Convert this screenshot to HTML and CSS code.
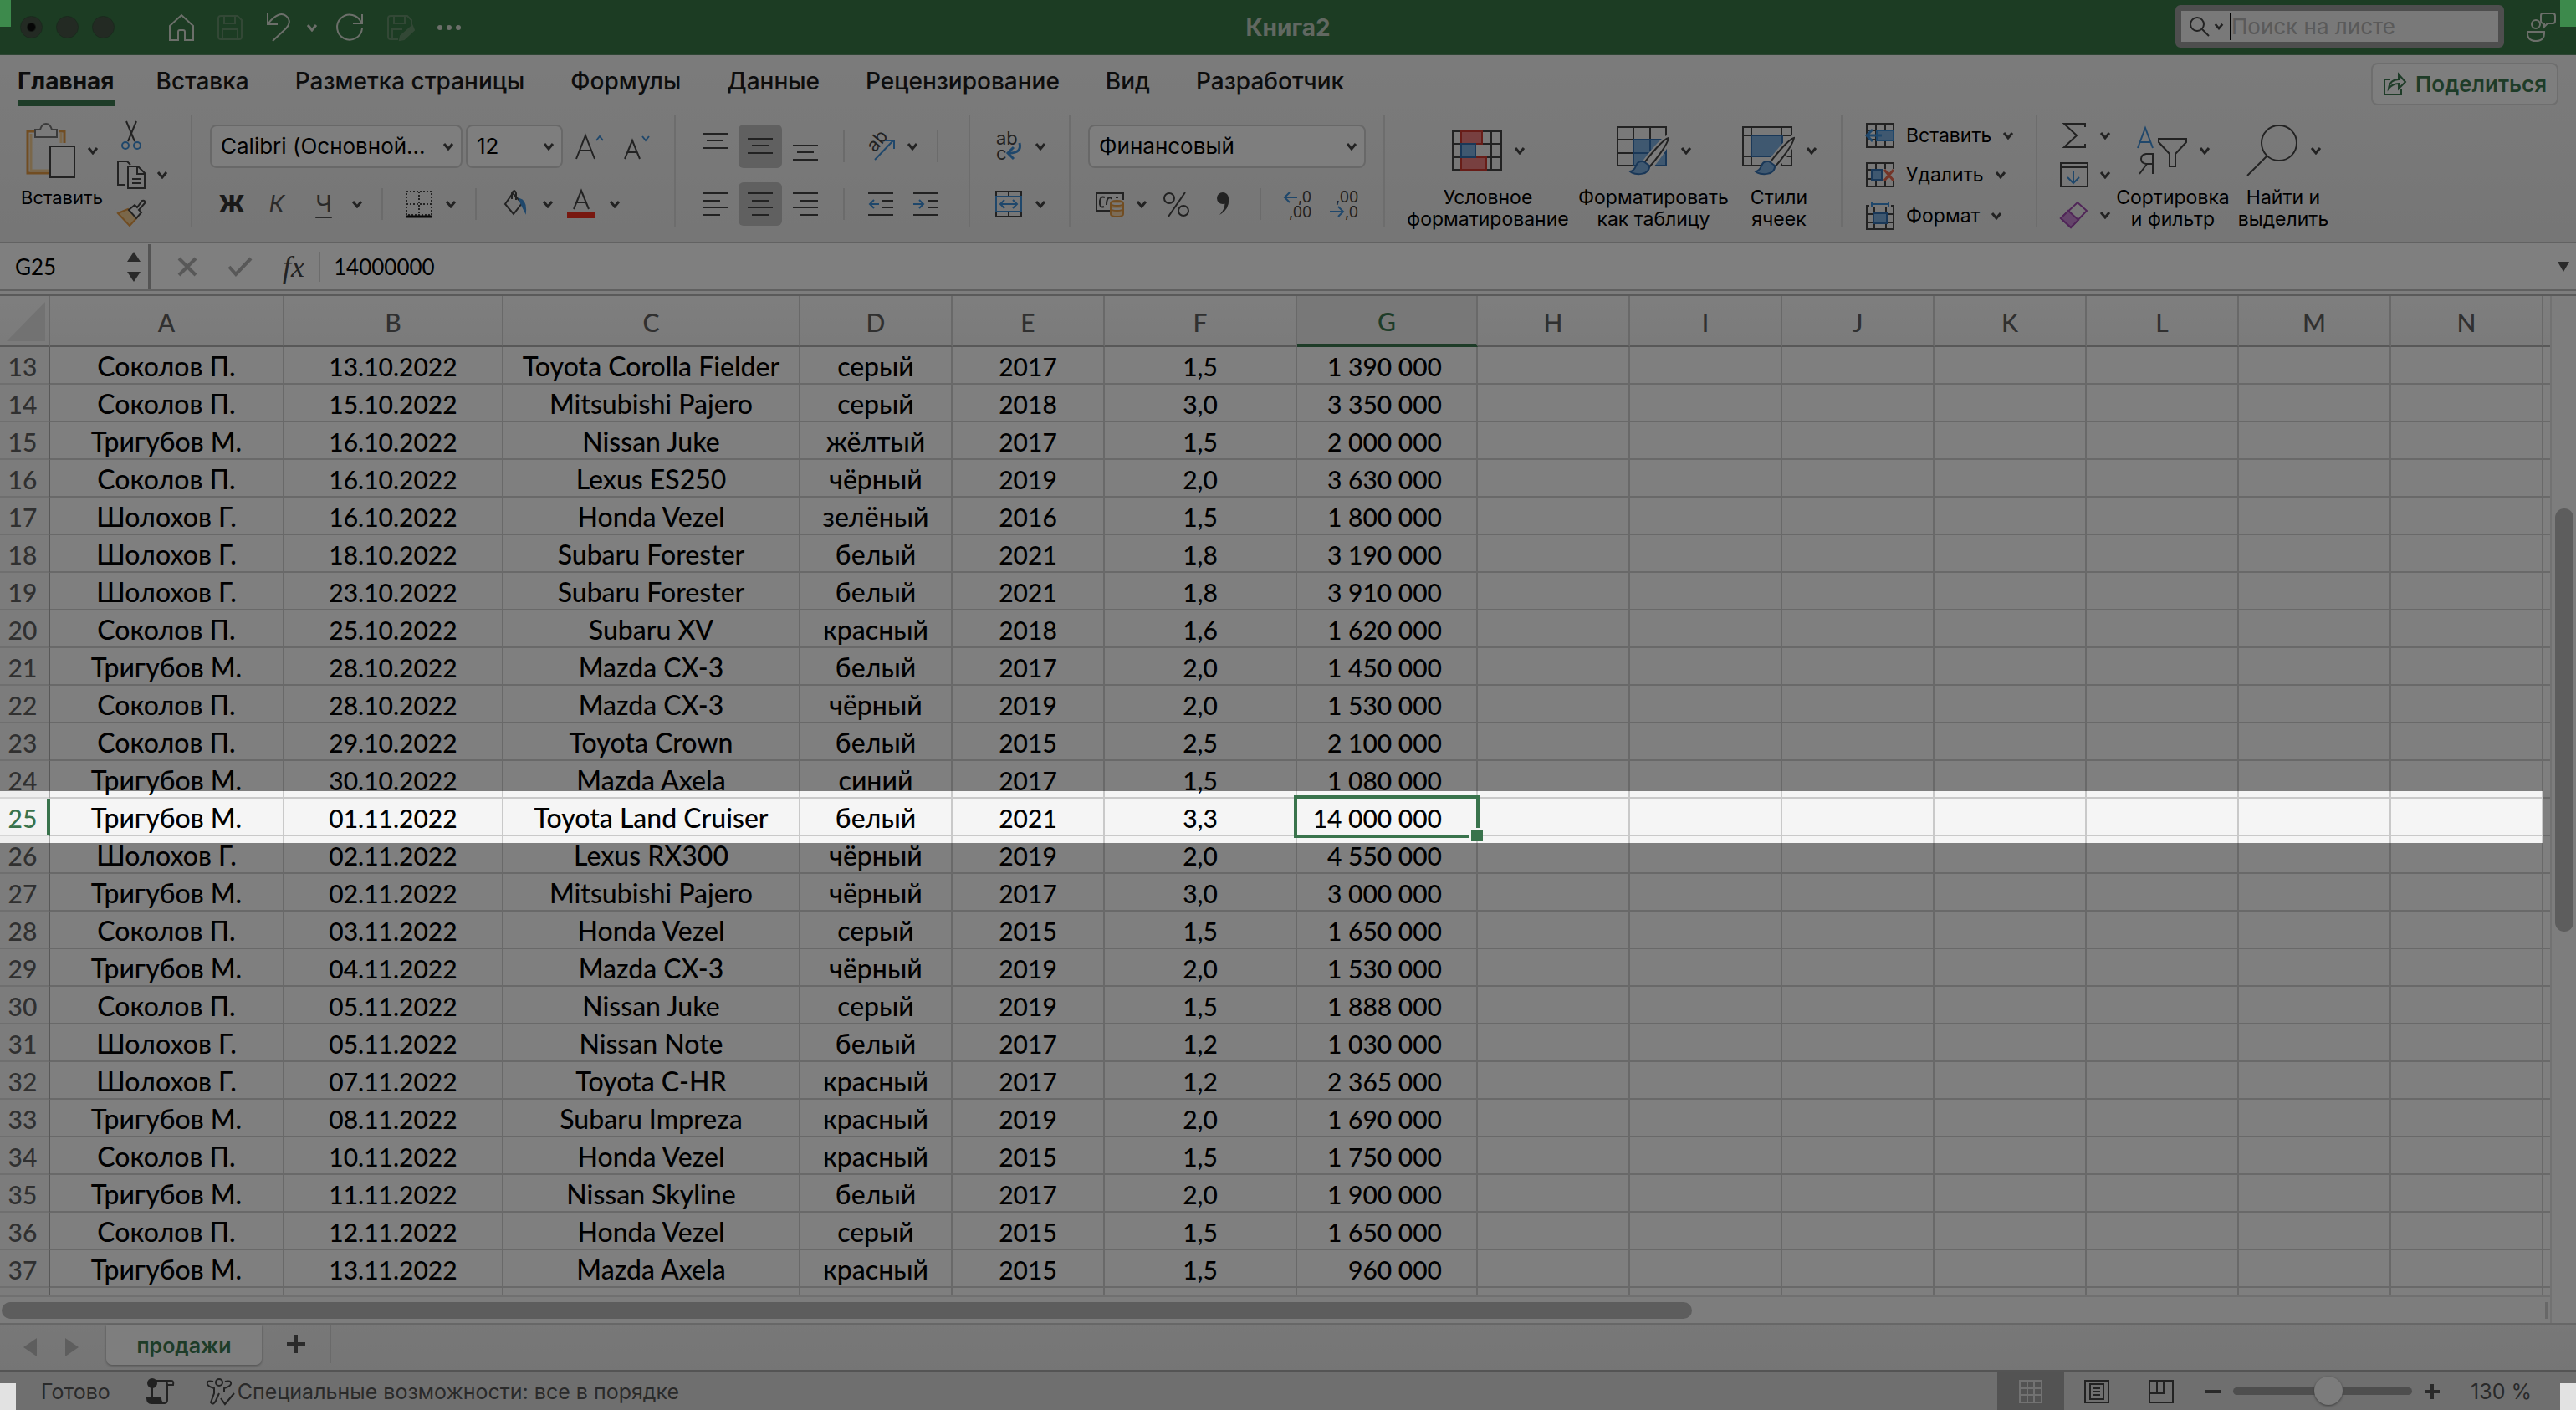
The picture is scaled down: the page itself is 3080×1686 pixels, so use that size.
FILE: index.html
```html
<!DOCTYPE html>
<html lang="ru">
<head>
<meta charset="utf-8">
<title>Книга2</title>
<link rel="stylesheet" href="styles.css">
</head>
<body>
<svg class="defs" aria-hidden="true">
  <symbol id="chev" viewBox="0 0 14 10"><path d="M2 2l5 6 5-6" fill="none" stroke="currentColor" stroke-width="3"/></symbol>
  <symbol id="brush" viewBox="0 0 64 60"><path d="M63 15c-6 1-24 24-30 32l6 5C47 42 62 24 63 15z" fill="#f6f6f6" stroke="#f4f4f4" stroke-width="7"/><path d="M63 15c-6 1-22 20-30 31l6 5C47 42 62 23 63 15z" fill="#f6f6f6" stroke="#444" stroke-width="2"/><path d="M33 43c-12-1-6 10-16 12 5 5 24 5 23-7z" fill="#7fb0e0" stroke="#3570b0" stroke-width="2"/></symbol>
</svg>

<header class="titlebar">
  <div class="lights"><i class="on"></i><i></i><i></i></div>
  <nav class="quick">
    <button aria-label="Домой"><svg width="32" height="34" viewBox="0 0 32 34"><path d="M2 32V15L16 2l14 13v17H20V22q0-2-2-2h-4q-2 0-2 2v10z"/></svg></button>
    <button class="off" aria-label="Сохранить"><svg width="32" height="32" viewBox="0 0 32 32"><path d="M2 5q0-3 3-3h20l5 5v20q0 3-3 3H5q-3 0-3-3zM9 2v9h13V2M7 30V18h18v12"/></svg></button>
    <button aria-label="Отменить"><svg width="32" height="36" viewBox="0 0 32 36"><path d="M3 1v13h12M3 14C12 2 20 0 25 4c6 5 4 11 0 15L9 34"/></svg></button>
    <button aria-label="Список отмены"><svg width="14" height="10"><use href="#chev"/></svg></button>
    <button aria-label="Повторить"><svg width="36" height="36" viewBox="0 0 36 36"><path d="M33 2v11H22M32 12A15 15 0 1 0 33 19"/></svg></button>
    <button class="off" aria-label="Сохранить как"><svg width="34" height="32" viewBox="0 0 34 32"><path d="M14 30H5q-3 0-3-3V5q0-3 3-3h20l5 5v6M9 2v9h13V2M7 30V18h12"/><path d="M31 14l2 5-12 11-5 1 1-5z" fill="currentColor"/></svg></button>
    <button aria-label="Ещё"><svg width="30" height="8"><g fill="#d8dfd5" stroke="none"><circle cx="4" cy="4" r="3"/><circle cx="15" cy="4" r="3"/><circle cx="26" cy="4" r="3"/></g></svg></button>
  </nav>
  <h1>Книга2</h1>
  <div class="title-end">
    <label class="search">
      <svg width="26" height="26" viewBox="0 0 26 26"><circle cx="10" cy="10" r="8"/><path d="M16 16l8 8"/></svg>
      <svg width="12" height="9"><use href="#chev"/></svg>
      <i class="caret"></i>
      <input type="search" placeholder="Поиск на листе" aria-label="Поиск на листе">
    </label>
    <button class="people" aria-label="Соавторы"><svg width="36" height="36" viewBox="0 0 36 36"><circle cx="12" cy="14" r="5"/><path d="M2 23h20q1 11-10 11T2 23zM20 1h12q3 0 3 3v6q0 3-3 3h-6l-4 4v-4q-4 0-4-3V4q0-3 2-3z"/></svg></button>
  </div>
</header>

<section class="ribbon">
  <div class="tabs">
    <nav>
      <a class="current" href="#home">Главная</a><a href="#insert">Вставка</a><a href="#layout">Разметка страницы</a><a href="#formulas">Формулы</a><a href="#data">Данные</a><a href="#review">Рецензирование</a><a href="#view">Вид</a><a href="#dev">Разработчик</a>
    </nav>
    <button class="share"><svg width="28" height="28" viewBox="0 0 28 28"><path d="M9 8H2v18h20v-6M7 19C8 11 13 8 19 8V2l8 9-8 8v-6c-6 0-9 2-12 6z"/></svg>Поделиться</button>
  </div>

  <div class="tools">
    <div class="group g-clip">
      <button class="big"><span class="pic"><svg width="60" height="66" viewBox="0 0 60 66"><path d="M10 10H2v50h28M40 10h6v14" fill="none" stroke="#e39a45" stroke-width="3"/><path d="M6 13v44h24M42 12v12" fill="none" stroke="#f5cf94" stroke-width="3"/><path d="M11 17V8h6q2-7 7-7t7 7h6v9z" fill="#f4f4f4" stroke="#777" stroke-width="2"/><path d="M29 28h29v37H29z" fill="#f4f4f4" stroke="#444" stroke-width="2"/></svg><svg width="14" height="10"><use href="#chev"/></svg></span><span>Вставить</span></button>
      <div class="stack">
        <button aria-label="Вырезать"><svg width="36" height="36" viewBox="0 0 36 36"><path d="M12 1l10 24M24 1L14 25" stroke="#444" stroke-width="2"/><circle cx="11" cy="30" r="4" stroke="#3f8fd6"/><circle cx="25" cy="30" r="4" stroke="#3f8fd6"/></svg></button>
        <button class="with" aria-label="Копировать"><svg width="36" height="36" viewBox="0 0 36 36"><path d="M11 30H2V2h11l4 4M14 8h12l8 8v18H14zM25 8v9h9M19 23h10M19 28h10"/></svg><svg width="14" height="10"><use href="#chev"/></svg></button>
        <button aria-label="Формат по образцу"><svg width="36" height="34" viewBox="0 0 36 34"><path d="M2 17l12-5 11 10-9 10z" stroke="#e39a45" fill="#f5cf94"/><path d="M15 13l7-6 3 3 6-8q4-1 3 3l-7 8 3 3-6 7z" fill="#f4f4f4"/></svg></button>
      </div>
    </div>

    <div class="group g-font">
      <div class="row">
        <label class="pick w302"><select aria-label="Шрифт"><option>Calibri (Основной...</option></select><svg width="14" height="10"><use href="#chev"/></svg></label>
        <label class="pick w116"><select aria-label="Размер шрифта"><option>12</option></select><svg width="14" height="10"><use href="#chev"/></svg></label>
        <button class="w56" aria-label="Увеличить шрифт"><svg width="36" height="32" viewBox="0 0 36 32"><path d="M2 31L13 3l11 28M6 21h14"/><path d="M26 9l4-5 4 5" stroke="#3f8fd6"/></svg></button>
        <button class="w56" aria-label="Уменьшить шрифт"><svg width="36" height="32" viewBox="0 0 36 32"><path d="M4 31l9-22 9 22M7 23h12"/><path d="M25 4l4 5 4-5" stroke="#3f8fd6"/></svg></button>
      </div>
      <div class="row">
        <button class="w52 glyph bold">Ж</button>
        <button class="w56 glyph ital">К</button>
        <button class="w56 glyph under">Ч</button>
        <button class="w24" aria-label="Вид подчёркивания"><svg width="14" height="10"><use href="#chev"/></svg></button>
        <i class="bar"></i>
        <button class="w52" aria-label="Границы"><svg width="34" height="34" viewBox="0 0 34 34"><path d="M2 2h30v28H2zM17 2v28M2 17h30" stroke-dasharray="2 2"/><path d="M1 32h32" stroke="#111" stroke-width="3"/></svg></button>
        <button class="w24" aria-label="Вид границ"><svg width="14" height="10"><use href="#chev"/></svg></button>
        <i class="bar"></i>
        <button class="w56" aria-label="Заливка"><svg width="34" height="34" viewBox="0 0 34 34"><path d="M15 4l11 12-10 13L6 17zM14 11V4q3-6 5 0v8"/><path d="M23 11q8 2 7 15l-4-8z" fill="#3f8fd6" stroke="#3f8fd6"/></svg></button>
        <button class="w24" aria-label="Цвет заливки"><svg width="14" height="10"><use href="#chev"/></svg></button>
        <button class="w56" aria-label="Цвет текста"><svg width="36" height="36" viewBox="0 0 36 36"><path d="M9 24l9-22 9 22M12 16h12"/><path d="M1 27h34v8H1z" fill="#f03020" stroke="none"/></svg></button>
        <button class="w24" aria-label="Выбор цвета текста"><svg width="14" height="10"><use href="#chev"/></svg></button>
      </div>
    </div>

    <div class="group g-align">
      <div class="row">
        <button class="w56" aria-label="По верхнему краю"><svg width="32" height="36" viewBox="0 0 32 36"><path d="M1 3h30M6 11h20M1 20h30"/></svg></button>
        <button class="w52 pressed" aria-label="Посередине"><svg width="32" height="36" viewBox="0 0 32 36"><path d="M1 9h30M6 17h20M1 26h30"/></svg></button>
        <button class="w56" aria-label="По нижнему краю"><svg width="32" height="36" viewBox="0 0 32 36"><path d="M1 17h30M6 25h20M1 34h30"/></svg></button>
        <i class="bar"></i>
        <button class="w52" aria-label="Ориентация"><svg width="38" height="36" viewBox="0 0 38 36"><text x="0" y="0" transform="translate(12 26) rotate(-50)" class="ab">ab</text><path d="M12 34L34 11M24 11h11v10" stroke="#3f8fd6"/></svg></button>
        <button class="w24" aria-label="Виды ориентации"><svg width="14" height="10"><use href="#chev"/></svg></button>
        <i class="bar"></i>
      </div>
      <div class="row">
        <button class="w56" aria-label="По левому краю"><svg width="32" height="32" viewBox="0 0 32 32"><path d="M1 3h30M1 12h21M1 20h30M1 29h21"/></svg></button>
        <button class="w52 pressed" aria-label="По центру"><svg width="32" height="32" viewBox="0 0 32 32"><path d="M1 3h30M6 12h20M1 20h30M6 29h20"/></svg></button>
        <button class="w56" aria-label="По правому краю"><svg width="32" height="32" viewBox="0 0 32 32"><path d="M1 3h30M10 12h21M1 20h30M10 29h21"/></svg></button>
        <i class="bar"></i>
        <button class="w52" aria-label="Уменьшить отступ"><svg width="32" height="32" viewBox="0 0 32 32"><path d="M1 3h30M18 12h13M18 20h13M1 29h30"/><path d="M14 16H3M8 11l-5 5 5 5" stroke="#3f8fd6"/></svg></button>
        <button class="w56" aria-label="Увеличить отступ"><svg width="32" height="32" viewBox="0 0 32 32"><path d="M1 3h30M18 12h13M18 20h13M1 29h30"/><path d="M1 16h12M8 11l5 5-5 5" stroke="#3f8fd6"/></svg></button>
      </div>
    </div>

    <div class="group g-wrap">
      <div class="row">
        <button class="w52" aria-label="Перенос текста"><svg width="34" height="36" viewBox="0 0 34 36"><text x="2" y="16" class="ab">ab</text><text x="2" y="34" class="ab">c</text><path d="M30 14q3 12-12 12M23 19l-7 7 7 7" stroke="#3f8fd6" stroke-width="3"/></svg></button>
        <button class="w24" aria-label="Виды переноса"><svg width="14" height="10"><use href="#chev"/></svg></button>
      </div>
      <div class="row">
        <button class="w52" aria-label="Объединить"><svg width="34" height="34" viewBox="0 0 34 34"><path d="M2 2h30v30H2zM17 2v6M17 26v6"/><path d="M2 8h30v18H2zM7 17h20M12 12l-5 5 5 5M22 12l5 5-5 5" stroke="#3f8fd6"/></svg></button>
        <button class="w24" aria-label="Виды объединения"><svg width="14" height="10"><use href="#chev"/></svg></button>
      </div>
    </div>

    <div class="group g-num">
      <div class="row">
        <label class="pick w332"><select aria-label="Числовой формат"><option>Финансовый</option></select><svg width="14" height="10"><use href="#chev"/></svg></label>
      </div>
      <div class="row">
        <button class="w52" aria-label="Денежный формат"><svg width="36" height="32" viewBox="0 0 36 32"><path d="M18 24H2V3h32v8M12 8q-5-2-6 4v4q1 5 5 3M20 10q-1-3-4-1-2 2-2 8M28 8h-3"/><path d="M19 15q0-3 7.500-3t7.500 3v13q0 3-7.500 3T19 28zM19 15q0 3 7.500 3t7.500-3M19 21q0 3 7.500 3t7.500-3" fill="#f6d9b0" stroke="#e39a45"/></svg></button>
        <button class="w24" aria-label="Валюта"><svg width="14" height="10"><use href="#chev"/></svg></button>
        <button class="w60" aria-label="Процент"><svg width="34" height="32" viewBox="0 0 34 32"><circle cx="8" cy="9" r="6"/><circle cx="25" cy="24" r="6"/><path d="M27 2L7 31"/></svg></button>
        <button class="w52" aria-label="Разделитель разрядов"><svg width="18" height="30" viewBox="0 0 18 30"><circle cx="8" cy="8" r="7" fill="#444" stroke="none"/><path d="M15 7q2 14-11 21 8-9 6-16z" fill="#444" stroke="none"/></svg></button>
        <i class="bar"></i>
        <button class="w52" aria-label="Увеличить разрядность"><svg width="36" height="36" viewBox="0 0 36 36"><text x="19" y="16" class="num">,0</text><text x="8" y="34" class="num">,00</text><path d="M18 10H3M9 4l-6 6 6 6" stroke="#3f8fd6"/></svg></button>
        <button class="w60" aria-label="Уменьшить разрядность"><svg width="36" height="36" viewBox="0 0 36 36"><text x="8" y="16" class="num">,00</text><text x="19" y="34" class="num">,0</text><path d="M1 27h15M11 21l6 6-6 6" stroke="#3f8fd6"/></svg></button>
      </div>
    </div>

    <div class="group g-style">
      <button class="big w192"><span class="pic"><svg width="62" height="50" viewBox="0 0 62 50"><path d="M2 2h58v46H2zM12 2v46M48 2v46M2 17h58M2 33h58"/><path d="M12 2h25v15H12zM12 33h30v15H12z" fill="#f08080" stroke="#d03a30"/><path d="M12 17h17v16H12z" fill="#7fb0e0" stroke="#3570b0"/></svg><svg width="14" height="10"><use href="#chev"/></svg></span><span>Условное<br>форматирование</span></button>
      <button class="big w180"><span class="pic"><svg width="64" height="60" viewBox="0 0 64 60"><path d="M60 2H2v46h58zM21 2v46M41 2v46M2 17h58M2 33h58"/><path d="M21 17h39v31H21z" fill="#7fb0e0" stroke="#3570b0"/><path d="M21 33h39M41 17v31" stroke="#3570b0"/><use href="#brush"/></svg><svg width="14" height="10"><use href="#chev"/></svg></span><span>Форматировать<br>как таблицу</span></button>
      <button class="big w96"><span class="pic"><svg width="64" height="60" viewBox="0 0 64 60"><path d="M60 2H2v46h58zM12 2v46M48 2v46M2 12h58M2 37h58"/><path d="M12 12h37v25H12z" fill="#7fb0e0" stroke="#3570b0"/><use href="#brush"/></svg><svg width="14" height="10"><use href="#chev"/></svg></span><span>Стили<br>ячеек</span></button>
    </div>

    <div class="group g-cells">
      <button><svg width="36" height="32" viewBox="0 0 36 32"><path d="M2 2h32v28H2zM13 2v28M24 2v28M2 10h32M2 21h32"/><path d="M14 10h20v12H14z" fill="#7fb0e0" stroke="#3f8fd6"/><path d="M20 16H2M9 9l-7 7 7 7" stroke="#3f8fd6" stroke-width="3"/></svg>Вставить<svg width="14" height="10"><use href="#chev"/></svg></button>
      <button><svg width="36" height="32" viewBox="0 0 36 32"><path d="M2 2h32v28H2zM13 2v28M24 2v28M2 10h32M2 21h32"/><path d="M8 10h12v12H8z" fill="#7fb0e0" stroke="#3570b0"/><path d="M22 9h14v14H22z" fill="#f4f4f4" stroke="none"/><path d="M23 10l11 13M34 10L23 23" stroke="#e86a50" stroke-width="3"/></svg>Удалить<svg width="14" height="10"><use href="#chev"/></svg></button>
      <button><svg width="36" height="36" viewBox="0 0 36 36"><path d="M5 6H2v28h32V6h-3M11 8v26M25 8v26M2 16h32M2 26h32"/><path d="M10 15h16v12H10z" fill="#7fb0e0" stroke="#3570b0"/><path d="M8 4h20M8 1v6M28 1v6" stroke="#3f8fd6"/></svg>Формат<svg width="14" height="10"><use href="#chev"/></svg></button>
    </div>

    <div class="group g-edit">
      <div class="stack">
        <button class="with" aria-label="Сумма"><svg width="36" height="32" viewBox="0 0 36 32"><path d="M31 6V2H6l15 14L6 30h25v-4"/></svg><svg width="14" height="10"><use href="#chev"/></svg></button>
        <button class="with" aria-label="Заполнить"><svg width="36" height="32" viewBox="0 0 36 32"><path d="M2 2h32v28H2zM2 7h32"/><path d="M17 11v15M10 19l7 7 7-7" stroke="#3f8fd6"/></svg><svg width="14" height="10"><use href="#chev"/></svg></button>
        <button class="with" aria-label="Очистить"><svg width="36" height="34" viewBox="0 0 36 34"><path d="M2 21L22 2l11 10-19 20z" stroke="#a04ab0"/><path d="M2 21l9-9 12 11-9 9z" fill="#c88ad4" stroke="#a04ab0"/></svg><svg width="14" height="10"><use href="#chev"/></svg></button>
      </div>
      <button class="big w148"><span class="pic"><svg width="62" height="60" viewBox="0 0 62 60"><path d="M2 27L11 3l9 24M5 20h12" stroke="#3f8fd6"/><path d="M20 58V34h-8q-6 1-6 6t6 6h8M13 46L4 58"/><path d="M27 16h33v4L47 34v15h-7V34L27 20z"/></svg><svg width="14" height="10"><use href="#chev"/></svg></span><span>Сортировка<br>и фильтр</span></button>
      <button class="big w116"><span class="pic"><svg width="64" height="64" viewBox="0 0 64 64"><circle cx="40" cy="23" r="21"/><path d="M25 39L2 62"/></svg><svg width="14" height="10"><use href="#chev"/></svg></span><span>Найти и<br>выделить</span></button>
    </div>
  </div>
</section>

<section class="formula">
  <label class="namebox"><input value="G25" aria-label="Имя"><svg width="16" height="36" viewBox="0 0 16 36"><path d="M8 0l8 12H0zM0 24h16L8 36z"/></svg></label>
  <button aria-label="Отмена"><svg width="24" height="24" viewBox="0 0 24 24"><path d="M2 2l20 20M22 2L2 22"/></svg></button>
  <button aria-label="Ввод"><svg width="30" height="24" viewBox="0 0 30 24"><path d="M2 12l8 9L28 2"/></svg></button>
  <button class="fx">fx</button>
  <input class="value" value="14000000" aria-label="Строка формул">
  <button class="expand" aria-label="Развернуть"><svg width="14" height="12" viewBox="0 0 14 12"><path d="M0 0h14L7 12z"/></svg></button>
</section>

<main class="sheet">
  <div class="cells">
  <table>
    <colgroup><col class="c60"><col class="c280"><col class="c262"><col class="c355"><col class="c182"><col class="c182"><col class="c230"><col class="c216"><col class="c182"><col class="c182"><col class="c182"><col class="c182"><col class="c182"><col class="c182"><col class="c182"><col></colgroup>
    <thead><tr><th class="corner"><svg width="46" height="47" viewBox="0 0 46 47"><path d="M46 0v47H0z"/></svg></th><th>A<th>B<th>C<th>D<th>E<th>F<th class="active">G<th>H<th>I<th>J<th>K<th>L<th>M<th>N<th></tr></thead>
    <tbody>
    <tr><th>13<td>Соколов П.<td>13.10.2022<td>Toyota Corolla Fielder<td>серый<td>2017<td>1,5<td>1 390 000<td><td><td><td><td><td><td><td>
    <tr><th>14<td>Соколов П.<td>15.10.2022<td>Mitsubishi Pajero<td>серый<td>2018<td>3,0<td>3 350 000<td><td><td><td><td><td><td><td>
    <tr><th>15<td>Тригубов М.<td>16.10.2022<td>Nissan Juke<td>жёлтый<td>2017<td>1,5<td>2 000 000<td><td><td><td><td><td><td><td>
    <tr><th>16<td>Соколов П.<td>16.10.2022<td>Lexus ES250<td>чёрный<td>2019<td>2,0<td>3 630 000<td><td><td><td><td><td><td><td>
    <tr><th>17<td>Шолохов Г.<td>16.10.2022<td>Honda Vezel<td>зелёный<td>2016<td>1,5<td>1 800 000<td><td><td><td><td><td><td><td>
    <tr><th>18<td>Шолохов Г.<td>18.10.2022<td>Subaru Forester<td>белый<td>2021<td>1,8<td>3 190 000<td><td><td><td><td><td><td><td>
    <tr><th>19<td>Шолохов Г.<td>23.10.2022<td>Subaru Forester<td>белый<td>2021<td>1,8<td>3 910 000<td><td><td><td><td><td><td><td>
    <tr><th>20<td>Соколов П.<td>25.10.2022<td>Subaru XV<td>красный<td>2018<td>1,6<td>1 620 000<td><td><td><td><td><td><td><td>
    <tr><th>21<td>Тригубов М.<td>28.10.2022<td>Mazda CX-3<td>белый<td>2017<td>2,0<td>1 450 000<td><td><td><td><td><td><td><td>
    <tr><th>22<td>Соколов П.<td>28.10.2022<td>Mazda CX-3<td>чёрный<td>2019<td>2,0<td>1 530 000<td><td><td><td><td><td><td><td>
    <tr><th>23<td>Соколов П.<td>29.10.2022<td>Toyota Crown<td>белый<td>2015<td>2,5<td>2 100 000<td><td><td><td><td><td><td><td>
    <tr><th>24<td>Тригубов М.<td>30.10.2022<td>Mazda Axela<td>синий<td>2017<td>1,5<td>1 080 000<td><td><td><td><td><td><td><td>
    <tr><th class="active">25<td>Тригубов М.<td>01.11.2022<td>Toyota Land Cruiser<td>белый<td>2021<td>3,3<td class="selected">14 000 000<td><td><td><td><td><td><td><td>
    <tr><th>26<td>Шолохов Г.<td>02.11.2022<td>Lexus RX300<td>чёрный<td>2019<td>2,0<td>4 550 000<td><td><td><td><td><td><td><td>
    <tr><th>27<td>Тригубов М.<td>02.11.2022<td>Mitsubishi Pajero<td>чёрный<td>2017<td>3,0<td>3 000 000<td><td><td><td><td><td><td><td>
    <tr><th>28<td>Соколов П.<td>03.11.2022<td>Honda Vezel<td>серый<td>2015<td>1,5<td>1 650 000<td><td><td><td><td><td><td><td>
    <tr><th>29<td>Тригубов М.<td>04.11.2022<td>Mazda CX-3<td>чёрный<td>2019<td>2,0<td>1 530 000<td><td><td><td><td><td><td><td>
    <tr><th>30<td>Соколов П.<td>05.11.2022<td>Nissan Juke<td>серый<td>2019<td>1,5<td>1 888 000<td><td><td><td><td><td><td><td>
    <tr><th>31<td>Шолохов Г.<td>05.11.2022<td>Nissan Note<td>белый<td>2017<td>1,2<td>1 030 000<td><td><td><td><td><td><td><td>
    <tr><th>32<td>Шолохов Г.<td>07.11.2022<td>Toyota C-HR<td>красный<td>2017<td>1,2<td>2 365 000<td><td><td><td><td><td><td><td>
    <tr><th>33<td>Тригубов М.<td>08.11.2022<td>Subaru Impreza<td>красный<td>2019<td>2,0<td>1 690 000<td><td><td><td><td><td><td><td>
    <tr><th>34<td>Соколов П.<td>10.11.2022<td>Honda Vezel<td>красный<td>2015<td>1,5<td>1 750 000<td><td><td><td><td><td><td><td>
    <tr><th>35<td>Тригубов М.<td>11.11.2022<td>Nissan Skyline<td>белый<td>2017<td>2,0<td>1 900 000<td><td><td><td><td><td><td><td>
    <tr><th>36<td>Соколов П.<td>12.11.2022<td>Honda Vezel<td>серый<td>2015<td>1,5<td>1 650 000<td><td><td><td><td><td><td><td>
    <tr><th>37<td>Тригубов М.<td>13.11.2022<td>Mazda Axela<td>красный<td>2015<td>1,5<td>960 000<td><td><td><td><td><td><td><td>
    <tr><th><td><td><td><td><td><td><td><td><td><td><td><td><td><td><td>
    </tbody>
  </table>
  </div>
  <div class="vscroll"><i></i></div>
  <div class="hscroll"><i></i><b></b></div>
  <div class="vfoot"></div>
</main>

<nav class="sheets">
  <button aria-label="Предыдущий лист"><svg width="16" height="22" viewBox="0 0 16 22"><path d="M16 0v22L0 11z"/></svg></button>
  <button aria-label="Следующий лист"><svg width="16" height="22" viewBox="0 0 16 22"><path d="M0 0v22l16-11z"/></svg></button>
  <a href="#sales">продажи</a>
  <button class="add" aria-label="Добавить лист"><svg width="24" height="24" viewBox="0 0 24 24"><path d="M10 1h4v9h9v4h-9v9h-4v-9H1v-4h9z"/></svg></button>
</nav>

<footer class="status">
  <span class="ready">Готово</span>
  <svg class="macro" width="34" height="32" viewBox="0 0 34 32"><circle cx="7" cy="6" r="5" fill="#444"/><path d="M7 8v16M12 3h18q3 0 2 5h-7v18q0 4-4 4M13 3h9q3 1 3 5"/><path d="M1 24h16q0 6 5 6H6q-5 0-5-6z" fill="#444"/></svg>
  <button class="access"><svg width="36" height="34" viewBox="0 0 36 34"><circle cx="17" cy="6" r="4"/><path d="M10 5q-8-2-7 3 1 3 8 5v6L7 30q3 4 6-2l4-9M24 5q8-2 7 3-1 3-8 5v5M19 25l5 7L35 19"/></svg>Специальные возможности: все в порядке</button>
  <div class="views">
    <button class="pressed" aria-label="Обычный"><svg width="28" height="28" viewBox="0 0 28 28"><path d="M1 1h26v26H1zM10 1v26M18 1v26M1 10h26M1 18h26"/></svg></button>
    <button aria-label="Разметка страницы"><svg width="30" height="28" viewBox="0 0 30 28"><path d="M1 1h28v26H1zM7 5h16v18H7zM11 10h8M11 14h8M11 18h8"/></svg></button>
    <button aria-label="Страничный"><svg width="30" height="28" viewBox="0 0 30 28"><path d="M1 1h28v26H1zM10 1v15M18 1v15H1"/></svg></button>
  </div>
  <div class="zoom">
    <button aria-label="Мельче"><svg width="18" height="18" viewBox="0 0 18 18"><path d="M0 7h18v4H0z"/></svg></button>
    <input type="range" min="0" max="100" value="54" aria-label="Масштаб">
    <button aria-label="Крупнее"><svg width="18" height="18" viewBox="0 0 18 18"><path d="M7 0h4v7h7v4h-7v7H7v-7H0V7h7z"/></svg></button>
    <span>130 %</span>
  </div>
</footer>

<div class="dim"></div>
<i class="edge tl"></i><i class="edge tr"></i><i class="edge bl"></i><i class="edge br"></i>
</body>
</html>
```
FILE: styles.css
```css
:root { --green: #3c7850; --ink: #444; --line: #d2d2d2; }
* { box-sizing: border-box; }
body {
  margin: 0; height: 100vh; display: flex; flex-direction: column; overflow: hidden;
  position: relative; background: #fff; color: #1a1a1a;
  font: 26px/32px Inter, "Noto Sans", sans-serif;
}
button, input, select { font: inherit; color: inherit; background: none; border: 0; margin: 0; padding: 0; border-radius: 0; outline: 0; }
button { display: flex; align-items: center; justify-content: center; }
a { color: inherit; text-decoration: none; }
i { font-style: normal; }
svg { display: block; flex: none; fill: none; stroke: var(--ink); stroke-width: 2; color: #444; overflow: visible; }
svg text { stroke: none; fill: var(--ink); }
.defs { position: absolute; width: 0; height: 0; }
.ab { font: 22px/22px Inter, sans-serif; }
.num { font: 18px/18px Inter, sans-serif; }

/* title bar */
.titlebar { flex: none; height: 66px; background: #387846; border-bottom: 1px solid #5b8a66; display: grid; grid-template-columns: 1fr auto 1fr; align-items: center; }
.titlebar h1 { grid-column: 2; margin: 0; font-size: 28px; font-weight: 700; color: #c2d0c2; }
.lights { grid-column: 1; grid-row: 1; display: flex; gap: 16px; padding-left: 24px; }
.lights i { width: 27px; height: 27px; border-radius: 50%; background: #465546; border: 1px solid #34533a; }
.lights .on { background: radial-gradient(circle, #0c0c0c 4px, #465546 6px); }
.quick { grid-column: 1; grid-row: 1; display: flex; align-items: center; gap: 26px; padding-left: 201px; }
.quick button:nth-child(4) { margin: 0 -6px 0 -9px; }
.quick svg, .people svg { stroke: #d8dfd5; color: #d8dfd5; }
.quick .off svg { stroke: #66906c; color: #66906c; }
.title-end { grid-column: 3; display: flex; justify-content: flex-end; gap: 26px; padding-right: 24px; }
.search { width: 393px; height: 51px; margin: -2px 0 0; border: 7px solid #9c9c9c; border-radius: 6px; background: #f2f2f2; display: flex; align-items: center; gap: 4px; padding-left: 9px; }
.search .caret { width: 2px; height: 32px; background: #000; margin: 0 -4px 0 3px; }
.search input { flex: 1; min-width: 0; }
.search input::placeholder { color: #b4b4b4; opacity: 1; }

/* ribbon */
.ribbon { flex: none; height: 225px; background: linear-gradient(#f7f7f7, #ececec); border-bottom: 2px solid #c4c4c4; display: flex; flex-direction: column; }
.tabs { display: flex; justify-content: space-between; align-items: flex-start; padding: 9px 21px 0; height: 70px; }
.tabs nav { display: flex; gap: 55px; font-size: 28px; font-weight: 500; }
.tabs nav a { padding: 6px 0 7px; border-bottom: 7px solid transparent; }
.tabs .current { font-weight: 700; border-color: var(--green); margin-right: -5px; }
.share { width: 224px; height: 51px; gap: 11px; border: 2px solid #dcdcdc; border-radius: 8px; background: #fcfcfc; color: var(--green); font-weight: 600; }
.share svg { stroke: var(--green); }
.tools { display: flex; height: 138px; }
.group { height: 134px; margin-top: 2px; border-right: 2px solid #dadada; display: flex; flex: none; }
.g-clip { width: 230px; }
.g-font { width: 578px; padding-left: 21px; }
.g-align { width: 352px; padding-left: 19px; }
.g-wrap { width: 120px; padding-left: 20px; }
.g-num { width: 376px; padding-left: 21px; }
.g-style { width: 547px; padding-left: 27px; gap: 12px; }
.g-cells { width: 233px; padding-left: 27px; }
.g-edit { border: 0; padding-left: 26px; }
.g-font, .g-align, .g-wrap, .g-num { flex-direction: column; padding-top: 11px; gap: 17px; }
.row { display: flex; align-items: center; height: 52px; }
.row button { height: 52px; flex: none; }
.w24 { width: 24px; } .w52 { width: 52px; } .w56 { width: 56px; } .w60 { width: 60px; } .w96 { width: 96px; }
.w116 { width: 116px; } .w148 { width: 148px; } .w180 { width: 180px; } .w192 { width: 192px; }
.w302 { width: 302px; } .w332 { width: 332px; }
.bar { width: 2px; height: 38px; background: #d6d6d6; margin: 0 17px; flex: none; }
.pressed { background: #c0c0c0; border-radius: 6px; }
.pick { display: grid; align-items: center; flex: none; height: 52px; border: 2px solid #d0d0d0; border-radius: 8px; background: #fcfcfc; margin-right: 4px; }
.pick select { grid-area: 1 / 1; appearance: none; width: 100%; height: 48px; padding-left: 11px; color: #000; }
.pick svg { grid-area: 1 / 1; justify-self: end; margin-right: 8px; pointer-events: none; }
.glyph { font-size: 28px; color: #333; }
.bold { font-weight: 800; }
.ital { font-style: italic; color: #555; }
.under { text-decoration: underline; text-underline-offset: 5px; color: #555; }
.big { flex-direction: column; justify-content: flex-start; flex: none; font-size: 23px; line-height: 26px; padding-top: 9px; color: #000; white-space: nowrap; }
.pic { display: flex; flex: none; align-items: center; gap: 13px; height: 66px; margin-bottom: 10px; }
.g-clip .big { width: 148px; font-size: 22px; }
.stack { display: flex; flex-direction: column; gap: 15px; align-items: flex-start; padding-top: 8px; flex: none; }
.g-clip .stack { margin-left: -9px; padding-top: 6px; gap: 11px; }
.with { gap: 12px; }
.g-cells { flex-direction: column; gap: 15px; align-items: flex-start; padding-top: 8px; font-size: 23px; }
.g-cells button { gap: 13px; color: #000; }

/* formula bar */
.formula { flex: none; height: 63px; display: flex; align-items: center; background: #fff; border-bottom: 3px solid #b4b4b4; box-shadow: inset 0 -3px #fafafa, inset 0 -6px #c0c0c0; font: 26px/32px Lato, "Noto Sans", sans-serif; color: #000; padding-bottom: 5px; }
.namebox { display: flex; align-items: center; width: 180px; height: 54px; border-right: 3px solid #a8a8a8; padding: 0 9px 0 18px; }
.namebox input { flex: 1; min-width: 0; }
.namebox svg, .expand svg { fill: #555; stroke: none; }
.formula > button { margin-left: 32px; }
.formula > button svg { stroke: #b0b0b0; stroke-width: 4; }
.formula > button + button { margin-left: 36px; }
.formula .fx { font: italic 36px/36px "Liberation Serif", serif; color: #444; padding-right: 17px; border-right: 2px solid #d8d8d8; }
.value { flex: 1; padding-left: 16px; min-width: 0; }
.formula .expand svg { stroke: none; }
.formula .expand { margin-right: 8px; }

/* grid */
.sheet { flex: 1; min-height: 0; display: grid; grid-template: minmax(0, 1fr) 33px / minmax(0, 1fr) 31px; font: 500 30px/40px Lato, "Open Sans", sans-serif; color: #000; }
.cells { overflow: hidden; }
table { table-layout: fixed; width: 100%; border-collapse: separate; border-spacing: 0; }
.c60 { width: 60px; } .c182 { width: 182px; } .c216 { width: 216px; } .c230 { width: 230px; }
.c262 { width: 262px; } .c280 { width: 280px; } .c355 { width: 355px; }
th, td { height: 45px; padding: 2px 0 0; border-right: 2px solid var(--line); border-bottom: 2px solid var(--line); text-align: center; font-weight: 500; white-space: nowrap; }
td:nth-child(2), td:nth-child(4), td:nth-child(5) { font-size: 32px; }
td:nth-child(8) { text-align: right; padding-right: 41px; }
td:last-child, thead th:last-child { border-right: 0; }
tbody th { background: #f8f8f8; color: #606060; border-color: #dedede; border-right-color: #b0b0b0; padding-right: 4px; }
thead th { height: 61px; background: linear-gradient(#fdfdfd, #f6f6f6); color: #606060; border-bottom-color: #b0b0b0; }
.corner svg { margin: 0 0 0 8px; fill: #e4e4e4; stroke: none; }
thead .active { background: #f0f0f0; color: var(--green); border-bottom: 4px solid var(--green); }
tbody .active { background: #fdfdfd; color: var(--green); border-right: 4px solid var(--green); padding-right: 2px; }
.selected { position: relative; }
.selected::before { content: ""; position: absolute; inset: -4px -4px -4px -4px; border: 4px solid var(--green); }
.selected::after { content: ""; position: absolute; right: -8px; bottom: -8px; width: 14px; height: 14px; background: var(--green); border: solid #fff; border-width: 2px 0 0 2px; }
.vscroll { border-left: 2px solid #e4e4e4; background: #fbfbfb; }
.vscroll i { display: block; width: 22px; height: 506px; margin: 254px 0 0 4px; border-radius: 11px; background: #bababa; }
.hscroll { border-top: 2px solid #e0e0e0; background: #fbfbfb; display: flex; align-items: center; justify-content: space-between; padding: 1px 3px 0 2px; }
.hscroll i { width: 2021px; height: 20px; border-radius: 10px; background: #bababa; }
.hscroll b { width: 3px; height: 20px; background: #d0d0d0; }
.vfoot { background: #fbfbfb; border-left: 2px solid #e4e4e4; }

/* sheet tabs */
.sheets { flex: none; height: 56px; background: linear-gradient(#f0f0f0, #ebebeb); border-top: 2px solid #cfcfcf; display: flex; align-items: flex-start; padding-left: 28px; }
.sheets button { height: 54px; }
.sheets button svg { fill: #bcbcbc; stroke: none; }
.sheets button + button { margin: 0 33px 0 34px; }
.sheets a { width: 186px; height: 48px; padding-top: 9px; text-align: center; font-size: 25px; font-weight: 600; color: var(--green); background: #fdfdfd; border-radius: 0 0 7px 7px; box-shadow: 0 1px 3px #999; }
.sheets .add { padding: 0 28px 0 29px; margin: 0; height: 46px; border-right: 2px solid #d4d4d4; }
.sheets a + .add svg { fill: #555; }

/* status bar */
.status { flex: none; height: 48px; background: #dedede; border-top: 3px solid #a8a8a8; display: flex; align-items: center; padding: 0 53px 0 49px; color: #555; font-size: 25px; }
.macro { margin: 0 36px 0 43px; }
.access { gap: 3px; }
.views { display: flex; margin-left: auto; align-self: stretch; }
.views button { width: 77px; }
.views .pressed { background: #a6a6a6; border-radius: 0; width: 80px; }
.views .pressed svg { stroke: #e4e4e4; }
.zoom { display: flex; align-items: center; gap: 15px; margin-left: 15px; }
.zoom svg { fill: #555; stroke: none; }
.zoom span { margin-left: 22px; }
.zoom input { appearance: none; width: 214px; height: 34px; }
.zoom input::-webkit-slider-runnable-track { height: 9px; border-radius: 5px; background: #9c9c9c; }
.zoom input::-webkit-slider-thumb { appearance: none; width: 34px; height: 34px; margin-top: -13px; border-radius: 50%; background: #f8f8f8; box-shadow: 0 1px 3px #777; }

/* dimmed page with one row left lit */
.dim { position: absolute; left: 0; right: 40px; top: 946px; height: 62px; background: rgba(0, 0, 0, .04); box-shadow: 0 0 0 4000px rgba(0, 0, 0, .5); pointer-events: none; }
.edge { position: absolute; width: 19px; height: 32px; }
.tl { left: 0; top: 0; width: 13px; background: #3d8a4c; }
.tr { right: 0; top: 0; background: #3d8a4c; }
.bl { left: 0; bottom: 0; background: #e2e2e2; }
.br { right: 0; bottom: 0; background: #e2e2e2; }
```
